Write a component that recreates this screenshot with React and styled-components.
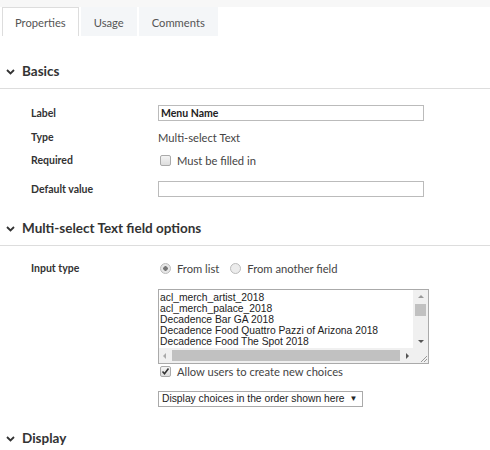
import styled, { createGlobalStyle } from "styled-components"

const GlobalStyle = createGlobalStyle`
  html, body { margin: 0; padding: 0; background: #fff; }
  body { font-family: Lato, "Open Sans", sans-serif; color: #333; }
`

const Page = styled.div`
  width: 490px;
  height: 450px;
  overflow: hidden;
  background: #fff;
`

const TopStrip = styled.div`
  height: 7px;
  background: #f7f7f7;
`

const TabBar = styled.div`
  display: flex;
  gap: 2px;
  padding-left: 2px;
`

const Tab = styled.div`
  height: 29px;
  box-sizing: border-box;
  padding: 0 12px;
  display: flex;
  align-items: center;
  font-size: 11.2px;
  color: #555;
  background: ${(p) => (p.$active ? "#fff" : "#f4f6f8")};
  border: 1px solid ${(p) => (p.$active ? "#ddd" : "transparent")};
  border-bottom: none;
`

const SectionHeader = styled.div`
  display: flex;
  align-items: center;
  gap: 7px;
  padding: ${(p) => p.$top}px 0 8px 6px;
  border-bottom: 1px solid #ddd;
  font-size: 13.5px;
  line-height: 17px;
  font-weight: 700;
  color: #333;
`

const Body = styled.div`
  padding-left: 31px;
`

const Row = styled.div`
  display: grid;
  grid-template-columns: 127px 1fr;
  align-items: center;
  height: ${(p) => p.$h || 20}px;
  margin-top: ${(p) => p.$mt || 0}px;
`

const Label = styled.div`
  font-size: 10.5px;
  font-weight: 700;
  color: #333;
`

const Value = styled.div`
  font-size: 11.2px;
  color: #444;
  display: flex;
  align-items: center;
  gap: 6px;
`

const TextInput = styled.div`
  width: 266px;
  height: 16px;
  box-sizing: border-box;
  border: 1px solid #bbb;
  font-size: 10.5px;
  font-weight: 700;
  color: #222;
  padding: 0 2px;
  line-height: 14px;
`

const Check = styled.span`
  width: 11px;
  height: 11px;
  box-sizing: border-box;
  border: 1px solid #aaa;
  border-radius: 2px;
  background: linear-gradient(#f4f4f4, #ddd);
  display: inline-flex;
  align-items: center;
  justify-content: center;
  margin-left: 2px;
`

const Radio = styled.span`
  width: 11px;
  height: 11px;
  box-sizing: border-box;
  border: 1px solid #bbb;
  border-radius: 50%;
  background: ${(p) => (p.$on ? "radial-gradient(circle, #777 0 2px, #e6e6e6 2.5px)" : "#ececec")};
  display: inline-block;
  margin-left: ${(p) => p.$ml || 0}px;
`

const ListBox = styled.div`
  width: 271px;
  height: 75px;
  box-sizing: border-box;
  border: 1px solid #aaa;
  display: grid;
  grid-template-columns: 1fr 15px;
  grid-template-rows: 1fr 15px;
  font-family: "Liberation Sans", Arial, sans-serif;
  font-size: 10.3px;
  line-height: 11px;
  color: #222;
`

const ListItems = styled.div`
  overflow: hidden;
  padding-left: 1px;
  padding-top: 2px;
  white-space: nowrap;
`

const VScroll = styled.div`
  background: #f0f0f0;
  display: flex;
  flex-direction: column;
  align-items: center;
  padding: 5px 0;
  box-sizing: border-box;
`

const HScroll = styled.div`
  background: #f0f0f0;
  display: flex;
  align-items: center;
  padding: 0 4px;
  gap: 6px;
`

const Thumb = styled.div`
  background: #c1c1c1;
  ${(p) => (p.$vertical ? "width: 11px; height: 12px; margin-top: 6px;" : "height: 11px; flex: 1;")}
`

const Corner = styled.div`
  background: #f0f0f0;
  display: flex;
  align-items: flex-end;
  justify-content: flex-end;
`

const Arrow = styled.span`
  width: 0;
  height: 0;
  border: 3px solid transparent;
  ${(p) =>
    ({
      up: "border-bottom: 3px solid #999; border-top-width: 0;",
      down: "border-top: 3px solid #555; border-bottom-width: 0; margin-top: auto;",
      left: "border-right: 3px solid #aaa; border-left-width: 0;",
      right: "border-left: 3px solid #555; border-right-width: 0;",
    })[p.$dir]}
`

const SelectBox = styled.div`
  justify-self: start;
  height: 16px;
  box-sizing: border-box;
  border: 1px solid #aaa;
  font-family: "Liberation Sans", Arial, sans-serif;
  font-size: 10.3px;
  line-height: 14px;
  padding: 0 4px 0 3px;
  color: #222;
  display: flex;
  align-items: center;
  gap: 5px;
  white-space: nowrap;
`

const Chevron = () => (
  <svg width="9" height="6" viewBox="0 0 9 6">
    <path d="M1 1l3.5 3.5L8 1" fill="none" stroke="#333" strokeWidth="1.8" />
  </svg>
)

const items = [
  "acl_merch_artist_2018",
  "acl_merch_palace_2018",
  "Decadence Bar GA 2018",
  "Decadence Food Quattro Pazzi of Arizona 2018",
  "Decadence Food The Spot 2018",
  "Decadence Merch 2018",
]

export default function App() {
  return (
    <Page>
      <GlobalStyle />
      <TopStrip />
      <TabBar>
        <Tab $active>Properties</Tab>
        <Tab>Usage</Tab>
        <Tab>Comments</Tab>
      </TabBar>

      <SectionHeader $top={27}>
        <Chevron />
        Basics
      </SectionHeader>
      <Body>
        <Row $mt={14}>
          <Label>Label</Label>
          <TextInput>Menu Name</TextInput>
        </Row>
        <Row $mt={4}>
          <Label>Type</Label>
          <Value>Multi-select Text</Value>
        </Row>
        <Row $mt={3}>
          <Label>Required</Label>
          <Value>
            <Check />
            Must be filled in
          </Value>
        </Row>
        <Row $mt={9}>
          <Label>Default value</Label>
          <TextInput />
        </Row>
      </Body>

      <SectionHeader $top={21}>
        <Chevron />
        Multi-select Text field options
      </SectionHeader>
      <Body>
        <Row $mt={12}>
          <Label>Input type</Label>
          <Value>
            <Radio $on $ml={2} />
            From list
            <Radio $ml={5} />
            From another field
          </Value>
        </Row>
        <Row $h={75} $mt={11}>
          <span />
          <ListBox>
            <ListItems>
              {items.map((t) => (
                <div key={t}>{t}</div>
              ))}
            </ListItems>
            <VScroll>
              <Arrow $dir="up" />
              <Thumb $vertical />
              <Arrow $dir="down" />
            </VScroll>
            <HScroll>
              <Arrow $dir="left" />
              <Thumb />
              <Arrow $dir="right" />
            </HScroll>
            <Corner>
              <svg width="10" height="10" viewBox="0 0 10 10">
                <path d="M9 3L3 9M9 6L6 9" stroke="#999" strokeWidth="1" />
              </svg>
            </Corner>
          </ListBox>
        </Row>
        <Row $h={14}>
          <span />
          <Value>
            <Check>
              <svg width="9" height="9" viewBox="0 0 9 9">
                <path d="M1.5 4.5l2 2.2L7.5 1.5" fill="none" stroke="#333" strokeWidth="1.6" />
              </svg>
            </Check>
            Allow users to create new choices
          </Value>
        </Row>
        <Row $h={16} $mt={13}>
          <span />
          <SelectBox>
            Display choices in the order shown here
            <span style={{ fontSize: 8 }}>▼</span>
          </SelectBox>
        </Row>
      </Body>

      <SectionHeader $top={23}>
        <Chevron />
        Display
      </SectionHeader>
    </Page>
  )
}
